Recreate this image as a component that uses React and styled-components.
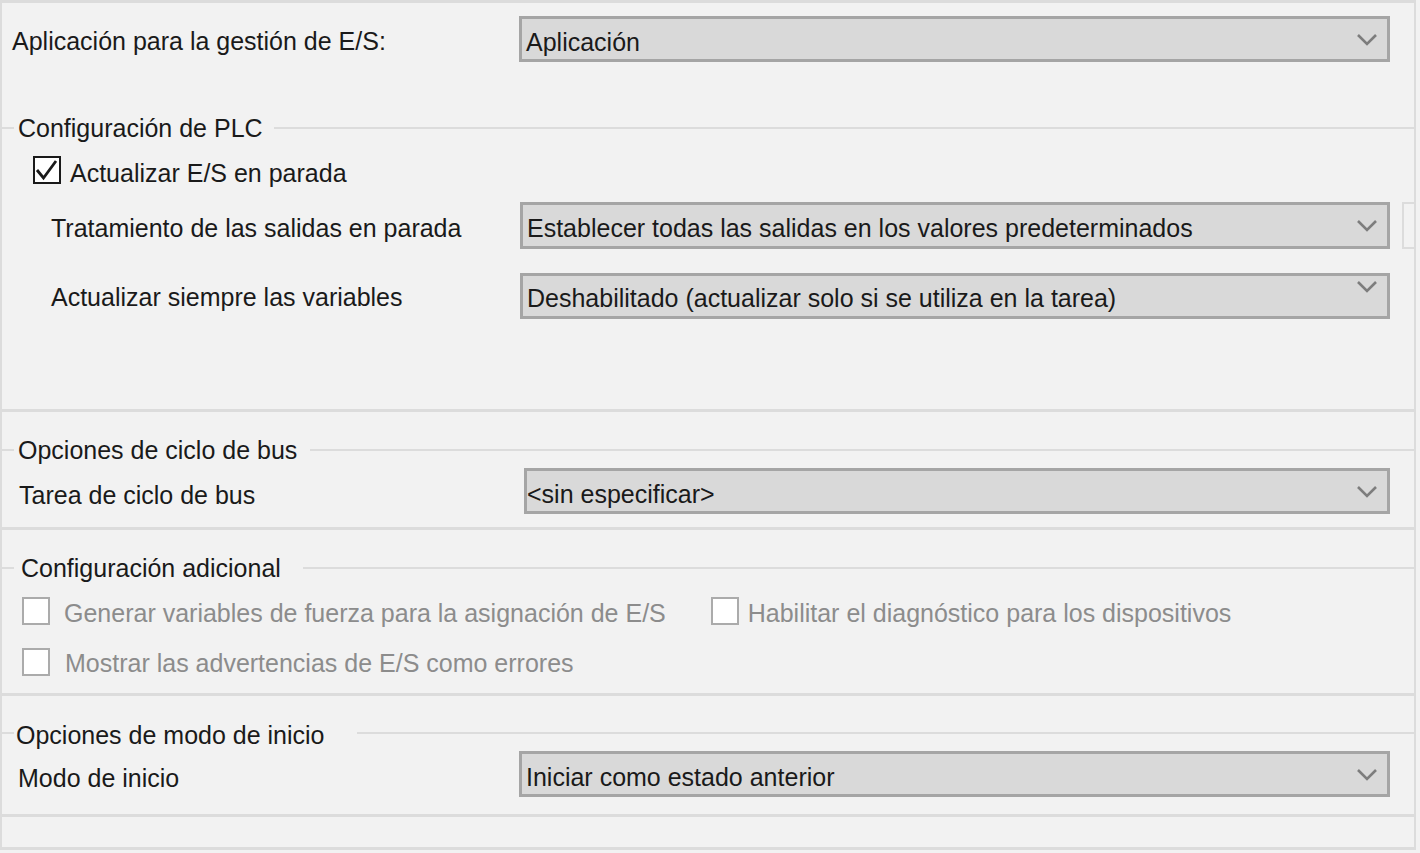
import React from 'react';
import styled, { createGlobalStyle } from 'styled-components';

const GlobalStyle = createGlobalStyle`
  html, body {
    margin: 0;
    padding: 0;
    background: #f2f2f2;
  }
  body {
    font-family: "Liberation Sans", Arial, sans-serif;
    font-size: 25px;
    color: #1a1a1a;
  }
`;

// nudges text down without changing the row height
const nudge = p => `
  margin-top: ${p.shift || 0}px;
  margin-bottom: ${-(p.shift || 0)}px;
`;

const Panel = styled.div`
  width: 1412px;
  border: 2px solid #dcdcdc;
  border-top-width: 3px;
  border-bottom: none;
  background: #f2f2f2;
`;

const Section = styled.div`
  box-sizing: border-box;
  height: ${p => p.h}px;
  padding-top: ${p => p.pt || 0}px;
  border-bottom: 3px solid #dcdcdc;
  display: flex;
  flex-direction: column;
`;

const GroupHeader = styled.div`
  display: flex;
  align-items: center;
  height: 28px;
  margin-top: ${p => p.mt || 0}px;
`;

const HeaderLine = styled.div`
  height: 2px;
  background: #dcdcdc;
  flex: ${p => (p.grow ? 1 : '0 0 12px')};
  margin-left: ${p => p.ml || 0}px;
`;

const HeaderText = styled.span`
  margin-left: ${p => p.ml || 4}px;
  ${nudge}
  white-space: nowrap;
  line-height: 1.15;
`;

const FieldRow = styled.div`
  display: grid;
  grid-template-columns: ${p => p.col}px 1fr 24px;
  align-items: center;
  margin-top: ${p => p.mt || 0}px;
`;

const Label = styled.span`
  padding-left: ${p => p.pl}px;
  ${nudge}
  white-space: nowrap;
  line-height: 1.15;
`;

const Combo = styled.div`
  box-sizing: border-box;
  height: ${p => p.h || 46}px;
  background: #d9d9d9;
  border: 3px solid #a5a5a5;
  display: flex;
  align-items: center;
  padding-left: ${p => p.pl ?? 4}px;
  padding-right: 9px;
`;

const ComboText = styled.span`
  flex: 1;
  ${nudge}
  white-space: nowrap;
  line-height: 1.15;
`;

const Chevron = styled.svg`
  flex: none;
  align-self: ${p => (p.top ? 'flex-start' : 'center')};
  margin-top: ${p => (p.top ? 4 : 0)}px;
`;

const SideStub = styled.div`
  justify-self: end;
  box-sizing: border-box;
  width: 12px;
  height: 47px;
  border: 2px solid #dcdcdc;
  border-right: none;
`;

const CheckRow = styled.div`
  display: flex;
  align-items: center;
  height: 28px;
  gap: ${p => p.gap || 45}px;
  padding-left: ${p => p.pl}px;
  margin-top: ${p => p.mt || 0}px;
`;

const CheckItem = styled.label`
  display: flex;
  align-items: center;
  gap: ${p => p.gap || 14}px;
  color: ${p => (p.disabled ? '#8c8c8c' : '#1a1a1a')};
`;

const Box = styled.span`
  box-sizing: border-box;
  flex: none;
  width: 28px;
  height: 28px;
  background: #ffffff;
  border: ${p => (p.checked ? '2px solid #1a1a1a' : '2px solid #ababab')};
  display: flex;
  align-items: center;
  justify-content: center;
`;

const CheckText = styled.span`
  ${nudge}
  white-space: nowrap;
  line-height: 1.15;
`;

const ChevronIcon = ({ top }) => (
  <Chevron top={top} width="22" height="13" viewBox="0 0 22 13">
    <path d="M2 2 L11 11 L20 2" fill="none" stroke="#7d7d7d" strokeWidth="2.6" />
  </Chevron>
);

const Dropdown = ({ value, h, pl, shift = 3, top }) => (
  <Combo h={h} pl={pl}>
    <ComboText shift={shift}>{value}</ComboText>
    <ChevronIcon top={top} />
  </Combo>
);

const Checkbox = ({ checked, disabled, children, gap, shift }) => (
  <CheckItem disabled={disabled} gap={gap}>
    <Box checked={checked}>
      {checked && (
        <svg width="24" height="22" viewBox="0 0 24 22">
          <path d="M2 11 L8.5 19 L21 2" fill="none" stroke="#1a1a1a" strokeWidth="2.8" />
        </svg>
      )}
    </Box>
    <CheckText shift={shift}>{children}</CheckText>
  </CheckItem>
);

const Group = ({ title, mt, textMl, gap, shift }) => (
  <GroupHeader mt={mt}>
    <HeaderLine />
    <HeaderText ml={textMl} shift={shift}>{title}</HeaderText>
    <HeaderLine grow ml={gap} />
  </GroupHeader>
);

export default function App() {
  return (
    <>
      <GlobalStyle />
      <Panel>
        <Section h={409} pt={13}>
          <FieldRow col={517}>
            <Label pl={10} shift={2}>Aplicación para la gestión de E/S:</Label>
            <Dropdown value="Aplicación" />
          </FieldRow>

          <Group title="Configuración de PLC" mt={52} textMl={4} gap={11} />

          <CheckRow pl={31} mt={14}>
            <Checkbox checked gap={9} shift={3}>Actualizar E/S en parada</Checkbox>
          </CheckRow>

          <FieldRow col={518} mt={18}>
            <Label pl={49} shift={3}>Tratamiento de las salidas en parada</Label>
            <Dropdown h={47} value="Establecer todas las salidas en los valores predeterminados" />
            <SideStub />
          </FieldRow>

          <FieldRow col={518} mt={24}>
            <Label pl={49} shift={1}>Actualizar siempre las variables</Label>
            <Dropdown top shift={2} value="Deshabilitado (actualizar solo si se utiliza en la tarea)" />
          </FieldRow>
        </Section>

        <Section h={118} pt={24}>
          <Group title="Opciones de ciclo de bus" textMl={4} gap={13} />
          <FieldRow col={522} mt={4}>
            <Label pl={17} shift={4}>Tarea de ciclo de bus</Label>
            <Dropdown pl={0} value="<sin especificar>" />
          </FieldRow>
        </Section>

        <Section h={166} pt={24}>
          <Group title="Configuración adicional" textMl={7} gap={22} />
          <CheckRow pl={20} mt={15}>
            <Checkbox disabled shift={2}>Generar variables de fuerza para la asignación de E/S</Checkbox>
            <Checkbox disabled gap={9} shift={2}>Habilitar el diagnóstico para los dispositivos</Checkbox>
          </CheckRow>
          <CheckRow pl={20} mt={23}>
            <Checkbox disabled gap={15} shift={1}>Mostrar las advertencias de E/S como errores</Checkbox>
          </CheckRow>
        </Section>

        <Section h={121} pt={23}>
          <Group title="Opciones de modo de inicio" textMl={2} gap={32} shift={2} />
          <FieldRow col={517} mt={4}>
            <Label pl={16} shift={4}>Modo de inicio</Label>
            <Dropdown value="Iniciar como estado anterior" />
          </FieldRow>
        </Section>

        <Section h={33} />
      </Panel>
    </>
  );
}
